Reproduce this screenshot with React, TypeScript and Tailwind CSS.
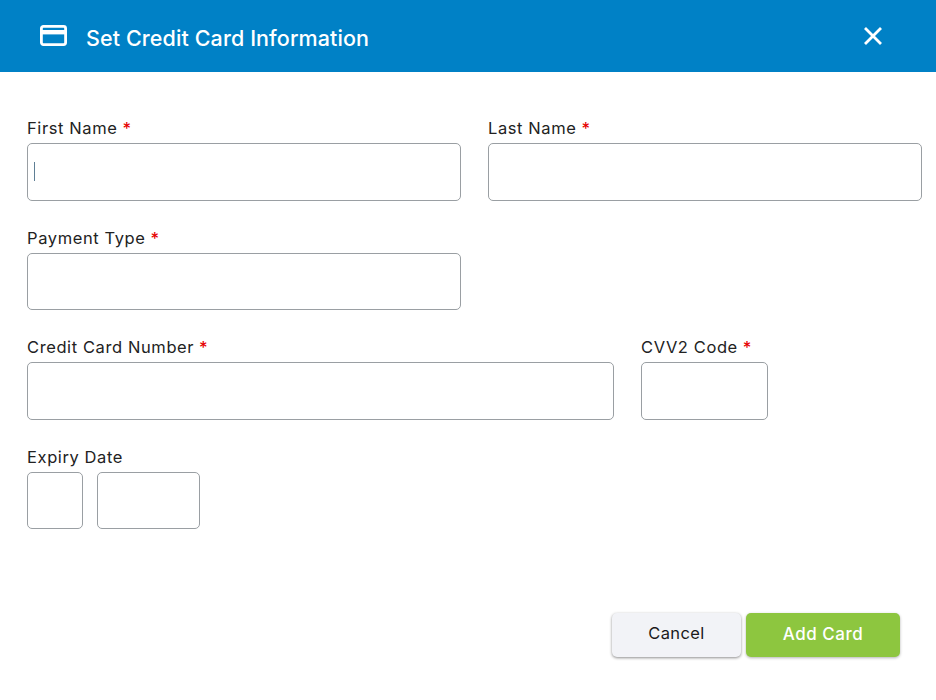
function Field({ label, req = true, w, caret = false }: { label: string; req?: boolean; w: string; caret?: boolean }) {
  return (
    <div className={`flex flex-col ${w}`}>
      <label className="h-[26px] text-[16.5px] leading-[22px] text-[#222222] tracking-[0.6px] whitespace-nowrap">
        {label}
        {req && <span className="text-[#e60000] font-medium"> *</span>}
      </label>
      <div className="flex h-[57.5px] items-center rounded-[5px] border border-[#9a9fa3] bg-white pl-[6px]">
        {caret && <div className="h-[19px] w-px bg-[#5f7f95]" />}
      </div>
    </div>
  );
}

export default function App() {
  return (
    <div className="flex h-[700px] w-[936px] flex-col bg-white font-['Inter',sans-serif]">
      <header className="flex h-[72px] shrink-0 items-center bg-[#0081c6] pl-[40px] pr-[53px] text-white">
        <svg width="27" height="21" viewBox="0 0 27 21" fill="none" className="mb-[1px]">
          <rect x="1.4" y="1.4" width="24.2" height="18.2" rx="2" stroke="white" strokeWidth="2.8" />
          <rect x="1" y="5" width="25" height="4.4" fill="white" />
        </svg>
        <h1 className="ml-[19px] mt-[5px] text-[21.5px] font-medium leading-none tracking-[0.1px] whitespace-nowrap">Set Credit Card Information</h1>
        <svg width="20" height="20" viewBox="0 0 20 20" fill="none" className="ml-auto">
          <path d="M2 2 L18 18 M18 2 L2 18" stroke="white" strokeWidth="2.8" />
        </svg>
      </header>
      <main className="flex flex-col gap-[26px] pl-[27px] pr-[14px] pt-[45px]">
        <div className="flex gap-[27px]">
          <Field label="First Name" w="w-[434px]" caret />
          <Field label="Last Name" w="w-[434px]" />
        </div>
        <div className="flex">
          <Field label="Payment Type" w="w-[434px]" />
        </div>
        <div className="flex gap-[27px]">
          <Field label="Credit Card Number" w="w-[587px]" />
          <Field label="CVV2 Code" w="w-[127px]" />
        </div>
        <div className="flex flex-col">
          <label className="h-[26px] text-[16.5px] leading-[22px] text-[#222222] tracking-[0.6px]">Expiry Date</label>
          <div className="flex gap-[14px]">
            <div className="h-[57.5px] w-[56px] rounded-[5px] border border-[#9a9fa3]" />
            <div className="h-[57.5px] w-[103px] rounded-[5px] border border-[#9a9fa3]" />
          </div>
        </div>
      </main>
      <footer className="mt-[84px] flex justify-end gap-[5px] pr-[36px]">
        <button className="h-[44px] w-[129px] rounded-[5px] bg-[#f2f3f7] pb-[3px] text-[16.5px] tracking-[0.4px] text-[#1a1a1a] shadow-[0_1px_3px_rgba(0,0,0,0.45)]">Cancel</button>
        <button className="h-[44px] w-[154px] rounded-[5px] bg-[#8dc63f] pb-[1px] text-[17px] tracking-[0.5px] font-medium text-white shadow-[0_1px_3px_rgba(0,0,0,0.3)]">Add Card</button>
      </footer>
    </div>
  );
}
